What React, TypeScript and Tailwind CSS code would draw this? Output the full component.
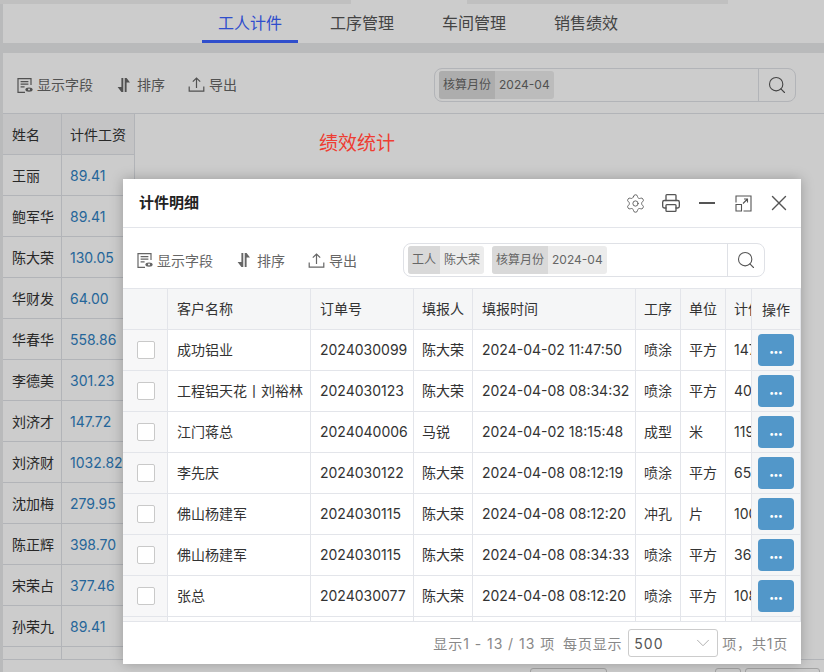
import { ChevronDown, Printer, Search, Settings, X } from "lucide-react"
import type { ReactNode } from "react"

const FONT = "font-['Inter','Noto_Sans_CJK_SC',sans-serif]"

const tabs = ["工人计件", "工序管理", "车间管理", "销售绩效"]

const workers = [
  ["王丽", "89.41"],
  ["鲍军华", "89.41"],
  ["陈大荣", "130.05"],
  ["华财发", "64.00"],
  ["华春华", "558.86"],
  ["李德美", "301.23"],
  ["刘济才", "147.72"],
  ["刘济财", "1032.82"],
  ["沈加梅", "279.95"],
  ["陈正辉", "398.70"],
  ["宋荣占", "377.46"],
  ["孙荣九", "89.41"],
]

const rows = [
  ["成功铝业", "2024030099", "陈大荣", "2024-04-02 11:47:50", "喷涂", "平方", "147"],
  ["工程铝天花丨刘裕林", "2024030123", "陈大荣", "2024-04-08 08:34:32", "喷涂", "平方", "408"],
  ["江门蒋总", "2024040006", "马锐", "2024-04-02 18:15:48", "成型", "米", "119"],
  ["李先庆", "2024030122", "陈大荣", "2024-04-08 08:12:19", "喷涂", "平方", "65."],
  ["佛山杨建军", "2024030115", "陈大荣", "2024-04-08 08:12:20", "冲孔", "片", "100"],
  ["佛山杨建军", "2024030115", "陈大荣", "2024-04-08 08:34:33", "喷涂", "平方", "367"],
  ["张总", "2024030077", "陈大荣", "2024-04-08 08:12:20", "喷涂", "平方", "108"],
]

function FieldsIcon() {
  return (
    <svg width="18" height="18" viewBox="0 0 18 18" fill="none" stroke="currentColor" strokeWidth="1.2">
      <path d="M15 9V2.6H2v13.8h7" />
      <path d="M4.6 5.6h7.8M4.6 8.2h7.8M4.6 10.8h4" />
      <ellipse cx="13" cy="13.6" rx="3.6" ry="2.2" fill="currentColor" stroke="none" />
      <circle cx="13" cy="13.6" r="1" fill="#fff" stroke="none" />
    </svg>
  )
}

function SortIcon() {
  return (
    <svg width="14" height="16" viewBox="0 0 14 16" fill="currentColor">
      <path d="M4.4 1h1.9v14H4.4L0.6 10h3.8z" />
      <path d="M7.7 15h1.9V5.6h3.4L9.6 1H7.7z" />
    </svg>
  )
}

function ExportIcon() {
  return (
    <svg width="17" height="17" viewBox="0 0 17 17" fill="none" stroke="currentColor" strokeWidth="1.2">
      <path d="M8.5 12V2M4.8 5.6l3.7-3.6 3.7 3.6" />
      <path d="M1.2 10.5v4.7h14.6v-4.7" />
    </svg>
  )
}

function Toolbar() {
  return (
    <div className="flex items-center text-[14px] text-[#666]">
      <span className="flex items-center gap-[3px]">
        <FieldsIcon />
        显示字段
      </span>
      <span className="ml-[24px] flex items-center gap-[6px]">
        <SortIcon />
        排序
      </span>
      <span className="ml-[23px] flex items-center gap-[4px]">
        <ExportIcon />
        导出
      </span>
    </div>
  )
}

function Chip({ label, value }: { label: string; value: string }) {
  return (
    <span className="flex h-[28px] items-center overflow-hidden rounded-[3px] bg-[#ececec] text-[12px] text-[#666]">
      <span className="flex h-full items-center bg-[#d9d9d9] px-[4px]">{label}</span>
      <span className="px-[4px]">{value}</span>
    </span>
  )
}

function SearchBox({ children }: { children: ReactNode }) {
  return (
    <div className="flex h-[34px] w-[362px] items-center rounded-[8px] border border-[#dfe1e6]">
      <div className="flex flex-1 items-center gap-[8px] pl-[4px]">{children}</div>
      <div className="flex h-full w-[37px] items-center justify-center border-l border-[#dfe1e6] text-[#555]">
        <Search size={20} strokeWidth={1.3} />
      </div>
    </div>
  )
}

function Background() {
  return (
    <div className="flex h-full flex-col">
      <div className="flex h-[4px] shrink-0">
        <div className="w-[351px] bg-[#f0f0f0]" />
        <div className="w-[116px] bg-white" />
        <div className="w-[261px] bg-[#f0f0f0]" />
        <div className="flex-1 bg-white" />
      </div>
      <div className="flex flex-1 flex-col pl-[3px]">
        <div className="flex h-[39px] gap-[16px] bg-white pl-[199px] text-[16px] text-[#555]">
          {tabs.map((t, i) => (
            <div
              key={t}
              className={`flex h-full w-[96px] items-center justify-center border-b-[3px] pt-[2px] ${i === 0 ? "border-[#3b62ff] text-[#3b62ff]" : "border-transparent"}`}
            >
              {t}
            </div>
          ))}
        </div>
        <div className="mt-[10px] flex flex-1 flex-col bg-white">
          <div className="flex h-[61px] shrink-0 items-center justify-between border-b border-[#dfe1e6] pl-[13px] pr-[28px] pt-[3px]">
            <Toolbar />
            <SearchBox>
              <Chip label="核算月份" value="2024-04" />
            </SearchBox>
          </div>
          <div className="flex border-b border-[#dfe1e6]">
            <div className="w-[132px] shrink-0 text-[14px]">
              <div className="flex h-[41px] border-b border-r border-[#dfe1e6] bg-[#f5f6f7] text-[#333]">
                <div className="flex w-[59px] items-center border-r border-[#dfe1e6] pl-[9px]">姓名</div>
                <div className="flex flex-1 items-center pl-[8px]">计件工资</div>
              </div>
              {workers.map(([name, pay]) => (
                <div key={name} className="flex h-[41px] border-b border-r border-[#dfe1e6]">
                  <div className="flex w-[59px] items-center border-r border-[#dfe1e6] pl-[9px] text-[#333]">{name}</div>
                  <div className="flex flex-1 items-center pl-[8px] text-[#2f7fc1]">{pay}</div>
                </div>
              ))}
              <div className="flex h-[12px] border-r border-[#dfe1e6]">
                <div className="w-[59px] border-r border-[#dfe1e6]" />
              </div>
            </div>
            {/* sits above the mask, the reference keeps this red bright */}
            <div className="relative z-10 ml-[184px] mt-[16px] h-fit text-[19px] text-[#ee3d32]">绩效统计</div>
          </div>
          <div className="flex pt-[8px]">
            <div className="ml-[527px] h-[30px] w-[77px] rounded-[3px] border border-[#ccc]" />
            <div className="ml-[108px] h-[30px] w-[26px] rounded-[3px] border border-[#ccc]" />
            <div className="ml-[4px] h-[30px] w-[75px] rounded-[3px] border border-[#ccc]" />
          </div>
        </div>
      </div>
    </div>
  )
}

const cell = "flex items-center border-r border-[#e3e5ea] pl-[8px] pb-[1px]"
const cellWide = "flex items-center border-r border-[#e3e5ea] pl-[9px] pb-[1px]"

function DetailTable() {
  return (
    <div className="relative h-[334px] shrink-0 overflow-hidden border-b border-[#e3e5ea] text-[14px] text-[#333]">
      <div className="flex h-[42px] border-y border-[#e3e5ea] bg-[#f5f6f7]">
        <div className={`${cell} w-[45px] shrink-0`} />
        <div className={`${cellWide} w-[143px] shrink-0`}>客户名称</div>
        <div className={`${cellWide} w-[103px] shrink-0`}>订单号</div>
        <div className={`${cell} w-[59px] shrink-0`}>填报人</div>
        <div className={`${cellWide} w-[163px] shrink-0`}>填报时间</div>
        <div className={`${cell} w-[45px] shrink-0`}>工序</div>
        <div className={`${cell} w-[45px] shrink-0`}>单位</div>
        <div className="flex flex-1 items-center pb-[1px] pl-[8px]">计件</div>
      </div>
      {rows.map((r, i) => (
        <div key={i} className="flex h-[41px] border-b border-[#e3e5ea]">
          <div className="flex w-[45px] shrink-0 items-center border-r border-[#e3e5ea] bg-[#f7f7f8] pl-[14px]">
            <span className="h-[18px] w-[18px] rounded-[2px] border border-[#c9c9c9] bg-white" />
          </div>
          <div className={`${cellWide} w-[143px] shrink-0 whitespace-nowrap`}>{r[0]}</div>
          <div className={`${cellWide} w-[103px] shrink-0`}>{r[1]}</div>
          <div className={`${cell} w-[59px] shrink-0`}>{r[2]}</div>
          <div className={`${cellWide} w-[163px] shrink-0`}>{r[3]}</div>
          <div className={`${cell} w-[45px] shrink-0`}>{r[4]}</div>
          <div className={`${cell} w-[45px] shrink-0`}>{r[5]}</div>
          <div className="flex flex-1 items-center pb-[1px] pl-[8px]">{r[6]}</div>
        </div>
      ))}
      <div className="flex h-[4px]">
        <div className="w-[45px] border-r border-[#e3e5ea] bg-[#f7f7f8]" />
        <div className="w-[143px] border-r border-[#e3e5ea]" />
        <div className="w-[103px] border-r border-[#e3e5ea]" />
        <div className="w-[59px] border-r border-[#e3e5ea]" />
        <div className="w-[163px] border-r border-[#e3e5ea]" />
        <div className="w-[45px] border-r border-[#e3e5ea]" />
        <div className="w-[45px] border-r border-[#e3e5ea]" />
      </div>
      {/* fixed action column */}
      <div className="absolute bottom-0 right-0 top-0 w-[50px] border-l border-r border-[#e3e5ea] bg-[#f5f6f7]">
        <div className="flex h-[42px] items-center justify-center border-y border-[#e3e5ea]">操作</div>
        {rows.map((_, i) => (
          <div key={i} className="flex h-[41px] items-center justify-center border-b border-[#e3e5ea]">
            <span className="flex h-[32px] w-[36px] items-center justify-center rounded-[4px] bg-[#5297c9] pt-[3px] text-[9px] font-bold leading-none text-white">
              •••
            </span>
          </div>
        ))}
      </div>
    </div>
  )
}

function HeaderIcon({ children }: { children: ReactNode }) {
  return <span className="flex h-[20px] w-[18px] items-center justify-center">{children}</span>
}

function Dialog() {
  return (
    <div className="absolute left-[123px] top-[179px] flex h-[485px] w-[678px] flex-col bg-white shadow-[0_0_12px_rgba(0,0,0,0.25)]">
      <div className="flex h-[49px] shrink-0 items-center justify-between border-b border-[#e3e5ea] pl-[16px] pr-[13px] text-[#555]">
        <span className="text-[15px] font-bold text-[#222]">计件明细</span>
        <div className="flex items-center gap-[18px]">
          <HeaderIcon>
            <Settings size={21} strokeWidth={1} className="shrink-0" />
          </HeaderIcon>
          <HeaderIcon>
            <Printer size={20} strokeWidth={1.6} className="shrink-0" />
          </HeaderIcon>
          <HeaderIcon>
            <span className="h-[2px] w-[16px] shrink-0 bg-[#555]" />
          </HeaderIcon>
          <HeaderIcon>
            <svg width="17" height="17" viewBox="0 0 17 17" fill="none" stroke="currentColor" strokeWidth="1.1">
              <path d="M1 7.5V1h15v15H8.5" />
              <path d="M1 9.5h5.5V16H1zM8 8.5l4.5-4.5M9 4h3.5v3.5" />
            </svg>
          </HeaderIcon>
          <HeaderIcon>
            <X size={26} strokeWidth={1.3} className="shrink-0" />
          </HeaderIcon>
        </div>
      </div>
      <div className="flex h-[60px] shrink-0 items-center pl-[13px] pt-[4px]">
        <Toolbar />
        <div className="ml-[46px]">
          <SearchBox>
            <Chip label="工人" value="陈大荣" />
            <Chip label="核算月份" value="2024-04" />
          </SearchBox>
        </div>
      </div>
      <DetailTable />
      <div className="flex flex-1 items-center justify-end pr-[13px] text-[14px] tracking-[0.8px] text-[#888]">
        <span className="tracking-[0.95px]">显示1 - 13 / 13 项</span>
        <span className="ml-[8px]">每页显示</span>
        <span className="ml-[6px] mr-[4px] flex h-[28px] w-[90px] items-center justify-between rounded-[3px] border border-[#ccc] pl-[5px] pr-[3px] tracking-[1px] text-[#555]">
          500
          <ChevronDown size={22} strokeWidth={1} className="text-[#aaa]" />
        </span>
        <span>项，共1页</span>
      </div>
    </div>
  )
}

export default function App() {
  return (
    <div className={`relative h-[672px] w-[824px] overflow-hidden bg-[#e8e9ea] ${FONT}`}>
      <Background />
      {/* modal mask */}
      <div className="absolute inset-0 bg-black/20" />
      <Dialog />
    </div>
  )
}
